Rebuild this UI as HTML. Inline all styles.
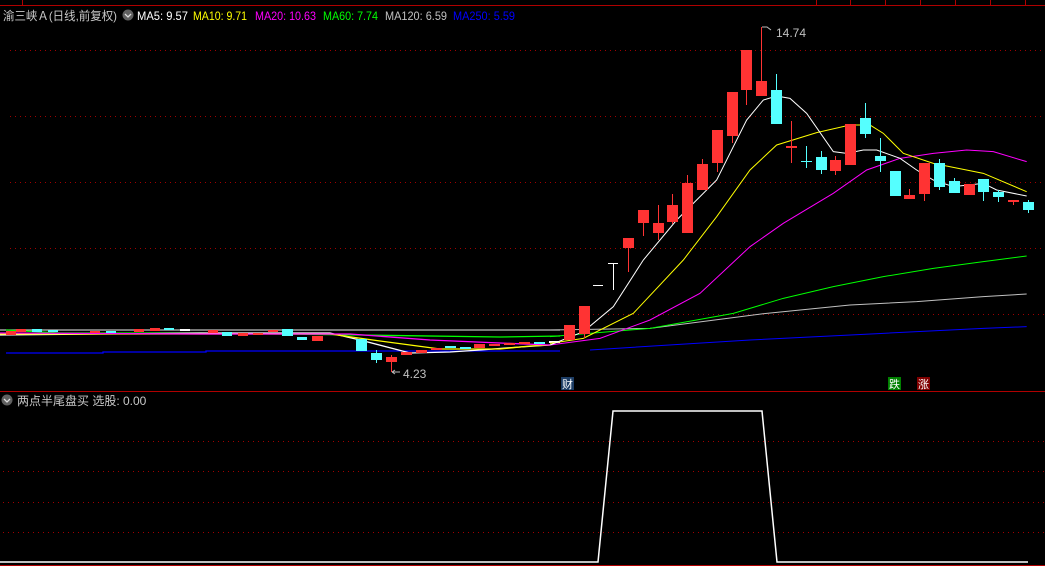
<!DOCTYPE html>
<html><head><meta charset="utf-8"><style>
html,body{margin:0;padding:0;background:#000;width:1045px;height:566px;overflow:hidden}
svg{display:block}
text{font-family:"Liberation Sans","Noto Sans CJK SC",sans-serif;font-size:12px}
</style></head><body>
<svg width="1045" height="566" viewBox="0 0 1045 566" xmlns="http://www.w3.org/2000/svg">
<rect width="1045" height="566" fill="#000"/>
<line x1="0" y1="5.5" x2="1045" y2="5.5" stroke="#b00000" stroke-width="1"/>
<g stroke="#b00000"><line x1="22.5" y1="0" x2="22.5" y2="5"/><line x1="816.5" y1="0" x2="816.5" y2="5"/><line x1="850.5" y1="0" x2="850.5" y2="5"/><line x1="885.5" y1="0" x2="885.5" y2="5"/><line x1="920.5" y1="0" x2="920.5" y2="5"/><line x1="955.5" y1="0" x2="955.5" y2="5"/><line x1="990.5" y1="0" x2="990.5" y2="5"/><line x1="1025.5" y1="0" x2="1025.5" y2="5"/></g>
<g stroke="#a00000" stroke-dasharray="1 4">
<line x1="10" y1="50.5" x2="1045" y2="50.5"/><line x1="10" y1="116.5" x2="1045" y2="116.5"/><line x1="10" y1="182.5" x2="1045" y2="182.5"/><line x1="10" y1="248.5" x2="1045" y2="248.5"/><line x1="3" y1="314.5" x2="1045" y2="314.5"/>
<line x1="3" y1="441.5" x2="1045" y2="441.5"/><line x1="3" y1="471.5" x2="1045" y2="471.5"/><line x1="3" y1="502.5" x2="1045" y2="502.5"/><line x1="3" y1="532.5" x2="1045" y2="532.5"/>
</g>
<line x1="0" y1="391.5" x2="1045" y2="391.5" stroke="#b00000"/>
<line x1="0" y1="565.5" x2="1045" y2="565.5" stroke="#b00000"/>
<text x="3" y="20" fill="#c8c8c8" textLength="114" lengthAdjust="spacingAndGlyphs">渝三峡Ａ(日线,前复权)</text>
<circle cx="128" cy="15" r="5.5" fill="#606060"/><path d="M125 14l3 3 3-3" stroke="#ddd" fill="none" stroke-width="1.3"/>
<text x="137" y="20" fill="#fff" textLength="51" lengthAdjust="spacingAndGlyphs">MA5: 9.57</text>
<text x="193" y="20" fill="#ff0" textLength="54" lengthAdjust="spacingAndGlyphs">MA10: 9.71</text>
<text x="255" y="20" fill="#f0f" textLength="61" lengthAdjust="spacingAndGlyphs">MA20: 10.63</text>
<text x="323" y="20" fill="#0f0" textLength="55" lengthAdjust="spacingAndGlyphs">MA60: 7.74</text>
<text x="385" y="20" fill="#c0c0c0" textLength="62" lengthAdjust="spacingAndGlyphs">MA120: 6.59</text>
<text x="453" y="20" fill="#0000ff" textLength="62" lengthAdjust="spacingAndGlyphs">MA250: 5.59</text>
<g fill="none" stroke-width="1.3">
<polyline stroke="#c0c0c0" points="0,330 560,330"/>
<polyline stroke="#0000ff" points="6,353 103,353 103,352 206,352 206,351 560,351"/>
<polyline stroke="#0f0" points="6,330 60,333 200,333 360,335 500,337 560,336"/>
<polyline stroke="#fff" points="0,335 100,334 200,333 330,333 360,340 410,353 450,352 480,350 520,347 550,345"/>
<polyline stroke="#ff0" points="0,334 200,334 330,334 380,341 440,349 500,349 530,346 550,345"/>
<polyline stroke="#f0f" points="0,333 200,334 350,334 430,340 500,343 550,345"/>
</g>
<g>
<rect x="6" y="331" width="10" height="4" fill="#ff3333"/><rect x="16" y="329" width="10" height="3" fill="#ff3333"/><rect x="32" y="329" width="10" height="3" fill="#5ff"/>
<rect x="48" y="330" width="10" height="2" fill="#5ff"/><rect x="90" y="331" width="10" height="2" fill="#ff3333"/><rect x="106" y="331" width="10" height="2" fill="#5ff"/>
<rect x="134" y="329" width="10" height="3" fill="#ff3333"/><rect x="150" y="328" width="10" height="3" fill="#ff3333"/><rect x="164" y="328" width="10" height="2" fill="#5ff"/>
<rect x="180" y="329" width="10" height="2" fill="#fff"/><rect x="208" y="330" width="10" height="3" fill="#ff3333"/><rect x="222" y="332" width="10" height="4" fill="#5ff"/>
<rect x="238" y="333" width="10" height="3" fill="#ff3333"/><rect x="253" y="333" width="10" height="2" fill="#ff3333"/><rect x="268" y="330" width="10" height="2" fill="#ff3333"/>
<rect x="282" y="329" width="11" height="7" fill="#5ff"/><rect x="297" y="337" width="10" height="3" fill="#5ff"/><rect x="312" y="336" width="11" height="5" fill="#ff3333"/>
<rect x="356" y="339" width="11" height="12" fill="#5ff"/>
<rect x="371" y="353" width="11" height="7" fill="#5ff"/><line x1="376.5" y1="350" x2="376.5" y2="363" stroke="#5ff"/>
<rect x="386" y="357" width="11" height="5" fill="#ff3333"/><line x1="391.5" y1="355" x2="391.5" y2="372" stroke="#ff3333"/>
<rect x="401" y="352" width="11" height="3" fill="#ff3333"/><rect x="416" y="350" width="11" height="3" fill="#ff3333"/>
<rect x="431" y="348" width="11" height="2" fill="#ff3333"/><rect x="445" y="346" width="11" height="2" fill="#5ff"/>
<rect x="460" y="347" width="11" height="2" fill="#5ff"/><rect x="474" y="344" width="11" height="4" fill="#ff3333"/>
<rect x="489" y="344" width="11" height="2" fill="#ff3333"/><rect x="504" y="343" width="11" height="2" fill="#ff3333"/>
<rect x="519" y="342" width="11" height="2" fill="#ff3333"/><rect x="534" y="342" width="11" height="2" fill="#5ff"/><rect x="549" y="341" width="11" height="2" fill="#fff"/>
</g>
<path d="M392 372h8M392 372l3-2M392 372l3 2" stroke="#bbb" fill="none"/>
<text x="403" y="378" fill="#c0c0c0">4.23</text>
<g transform="translate(550,20) scale(0.33333)" fill="none" stroke-width="3">
<polyline stroke="#0000ff" points="120,990 600,960 1000,940 1300,925 1430,920"/>
<polyline stroke="#c0c0c0" points="0,930 300,925 650,880 900,855 1100,845 1300,830 1430,822"/>
<polyline stroke="#0f0" points="0,950 300,925 550,880 700,835 850,800 1000,770 1150,745 1300,725 1430,708"/>
<polyline stroke="#f0f" points="0,975 150,955 300,900 450,820 600,680 700,610 850,520 950,450 1050,415 1150,400 1250,390 1330,395 1430,425"/>
<polyline stroke="#ff0" points="0,970 100,955 250,880 400,720 500,590 600,450 680,375 800,338 900,315 960,315 1000,340 1060,400 1150,430 1300,460 1430,515"/>
<polyline stroke="#fff" points="0,975 100,935 190,860 280,720 380,600 500,480 590,300 640,240 680,228 720,235 770,280 850,395 890,400 940,390 980,390 1050,415 1100,450 1150,480 1210,500 1300,490 1340,510 1430,528"/>
</g>
<g>
<g fill="#ff3333" stroke="#ff3333">
<rect x="564" y="325" width="11" height="15" stroke="none"/>
<line x1="584.5" y1="306" x2="584.5" y2="338"/><rect x="579" y="306" width="11" height="28" stroke="none"/>
<line x1="628.5" y1="238" x2="628.5" y2="272"/><rect x="623" y="238" width="11" height="10" stroke="none"/>
<line x1="643.5" y1="210" x2="643.5" y2="236"/><rect x="638" y="210" width="11" height="13" stroke="none"/>
<line x1="658.5" y1="205" x2="658.5" y2="240"/><rect x="653" y="223" width="11" height="10" stroke="none"/>
<line x1="672.5" y1="194" x2="672.5" y2="224"/><rect x="667" y="205" width="11" height="17" stroke="none"/>
<line x1="687.5" y1="175" x2="687.5" y2="233"/><rect x="682" y="183" width="11" height="50" stroke="none"/>
<line x1="702.5" y1="159" x2="702.5" y2="190"/><rect x="697" y="164" width="11" height="26" stroke="none"/>
<line x1="717.5" y1="130" x2="717.5" y2="172"/><rect x="712" y="130" width="11" height="33" stroke="none"/>
<line x1="732.5" y1="92" x2="732.5" y2="143"/><rect x="727" y="92" width="11" height="44" stroke="none"/>
<line x1="746.5" y1="50" x2="746.5" y2="105"/><rect x="741" y="50" width="11" height="40" stroke="none"/>
<line x1="761.5" y1="27" x2="761.5" y2="96"/><rect x="756" y="81" width="11" height="15" stroke="none"/>
<line x1="791.5" y1="121" x2="791.5" y2="163"/><rect x="786" y="146" width="11" height="2" stroke="none"/>
<line x1="835.5" y1="156" x2="835.5" y2="175"/><rect x="830" y="160" width="11" height="11" stroke="none"/>
<rect x="845" y="124" width="11" height="41" stroke="none"/>
<line x1="909.5" y1="189" x2="909.5" y2="199"/><rect x="904" y="195" width="11" height="4" stroke="none"/>
<line x1="924.5" y1="163" x2="924.5" y2="201"/><rect x="919" y="163" width="11" height="31" stroke="none"/>
<rect x="964" y="184" width="11" height="11" stroke="none"/>
<line x1="1013.5" y1="200" x2="1013.5" y2="205"/><rect x="1008" y="200" width="11" height="2" stroke="none"/>
</g>
<g fill="#55ffff" stroke="#55ffff">
<line x1="776.5" y1="74" x2="776.5" y2="124"/><rect x="771" y="90" width="11" height="34" stroke="none"/>
<line x1="806.5" y1="146" x2="806.5" y2="168"/><rect x="801" y="161" width="11" height="1" stroke="none"/>
<line x1="821.5" y1="151" x2="821.5" y2="174"/><rect x="816" y="157" width="11" height="13" stroke="none"/>
<line x1="865.5" y1="103" x2="865.5" y2="138"/><rect x="860" y="118" width="11" height="16" stroke="none"/>
<line x1="880.5" y1="138" x2="880.5" y2="172"/><rect x="875" y="156" width="11" height="5" stroke="none"/>
<rect x="890" y="171" width="11" height="25" stroke="none"/>
<line x1="939.5" y1="159" x2="939.5" y2="190"/><rect x="934" y="163" width="11" height="24" stroke="none"/>
<line x1="954.5" y1="178" x2="954.5" y2="193"/><rect x="949" y="181" width="11" height="12" stroke="none"/>
<line x1="983.5" y1="179" x2="983.5" y2="201"/><rect x="978" y="179" width="11" height="13" stroke="none"/>
<line x1="998.5" y1="190" x2="998.5" y2="202"/><rect x="993" y="192" width="11" height="5" stroke="none"/>
<line x1="1028.5" y1="200" x2="1028.5" y2="213"/><rect x="1023" y="202" width="11" height="8" stroke="none"/>
</g>
<g stroke="#fff"><line x1="593" y1="285.5" x2="603" y2="285.5"/><line x1="608" y1="263.5" x2="618" y2="263.5"/><line x1="613.5" y1="263" x2="613.5" y2="290"/></g>
</g>
<path d="M762 27h5l4 3" stroke="#bbb" fill="none"/>
<text x="776" y="37" fill="#c0c0c0">14.74</text>
<rect x="561" y="377" width="13" height="13" fill="#1c3c64"/><text x="562" y="388" fill="#fff" style="font-size:11px">财</text>
<rect x="888" y="377" width="13" height="13" fill="#008000"/><text x="889" y="388" fill="#fff" style="font-size:11px">跌</text>
<rect x="917" y="377" width="13" height="13" fill="#800000"/><text x="918" y="388" fill="#fff" style="font-size:11px">涨</text>
<circle cx="7" cy="400" r="5.5" fill="#606060"/><path d="M4 399l3 3 3-3" stroke="#ddd" fill="none" stroke-width="1.3"/>
<text x="17" y="405" fill="#c8c8c8">两点半尾盘买 选股: 0.00</text>
<polyline fill="none" stroke="#fff" stroke-width="1.5" points="0,562 598,562 613,411 762,411 777,562 1028,562"/>
</svg>
</body></html>
